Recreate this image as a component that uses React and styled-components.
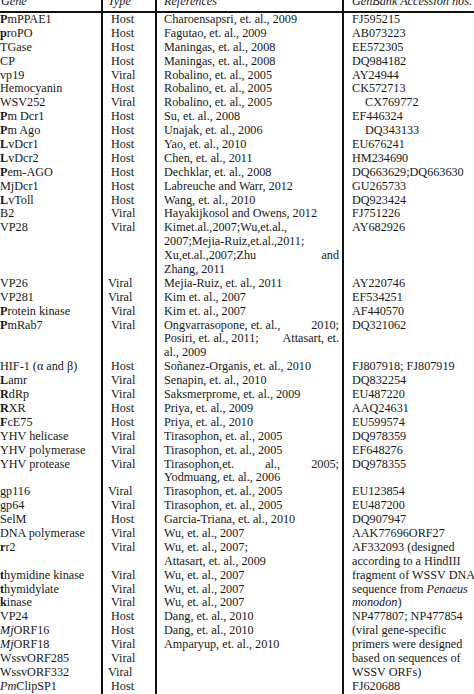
import React from "react";
import styled, { createGlobalStyle } from "styled-components";

const GlobalStyle = createGlobalStyle`
  *, *::before, *::after { box-sizing: border-box; }
  html, body {
    margin: 0;
    padding: 0;
    background: #fff;
  }
  body {
    width: 474px;
    height: 694px;
    overflow: hidden;
    font-family: "Liberation Serif", "Times New Roman", serif;
    color: #171717;
  }
`;

const Table = styled.div`
  display: grid;
  grid-template-columns: 103px 54px 187px 130px;
  margin-top: -5px;
  font-size: 12.2px;
  line-height: 13.9px;
`;

const Column = styled.div`
  display: flex;
  flex-direction: column;
  min-width: 0;
  border-right: ${(p) => (p.$last ? "none" : "2px solid #111")};

  & > div {
    padding-left: ${(p) => p.$left}px;
    padding-right: ${(p) => p.$right || 0}px;
  }
`;

const HeadCell = styled.div`
  height: 18px;
  border-bottom: 2px solid #111;
  font-style: italic;
  white-space: nowrap;
  && {
    padding-left: ${(p) => p.$left}px;
  }
`;

const Line = styled.div`
  height: 13.9px;
  white-space: nowrap;
  display: ${(p) => (p.$spread ? "flex" : "block")};
  justify-content: space-between;
  margin-left: ${(p) => p.$shift || 0}px;
`;

const Lead = styled.b`
  font-weight: 700;
`;

const Em = styled.i`
  font-style: italic;
`;

const lead = (first, rest) => (
  <>
    <Lead>{first}</Lead>
    {rest}
  </>
);

const genes = [
  lead("P", "mPPAE1"),
  lead("p", "roPO"),
  "TGase",
  "CP",
  "vp19",
  "Hemocyanin",
  "WSV252",
  lead("P", "m Dcr1"),
  lead("P", "m Ago"),
  lead("L", "vDcr1"),
  lead("L", "vDcr2"),
  lead("P", "em-AGO"),
  "MjDcr1",
  lead("L", "vToll"),
  "B2",
  "VP28",
  "",
  "",
  "",
  "VP26",
  "VP281",
  lead("P", "rotein kinase"),
  lead("P", "mRab7"),
  "",
  "",
  "HIF-1 (α and β)",
  lead("L", "amr"),
  lead("R", "dRp"),
  lead("R", "XR"),
  lead("F", "cE75"),
  "YHV helicase",
  "YHV polymerase",
  "YHV protease",
  "",
  "gp116",
  "gp64",
  "SelM",
  "DNA polymerase",
  lead("r", "r2"),
  "",
  lead("t", "hymidine kinase"),
  lead("t", "hymidylate"),
  lead("k", "inase"),
  "VP24",
  <><Em>Mj</Em>ORF16</>,
  <><Em>Mj</Em>ORF18</>,
  "WssvORF285",
  "WssvORF332",
  <><Em>Pm</Em>ClipSP1</>,
];

// "<" marks a type cell that sits a little further left
const types = [
  "Host", "Host", "Host", "Host", "Viral", "Host", "Viral", "Host", "Host",
  "Host", "Host", "Host", "Host", "Host", "Viral", "Viral", "", "", "",
  "<Viral", "<Viral", "Viral", "Viral", "", "", "Host", "Viral", "Viral",
  "Host", "Host", "Viral", "Viral", "Viral", "", "<Viral", "Viral", "Host",
  "Viral", "Viral", "", "Viral", "Viral", "Viral", "Host", "Host", "Viral",
  "Viral", "<Viral", "Host",
];

// arrays are lines whose pieces are spread across the column
const refs = [
  "Charoensapsri, et. al., 2009",
  "Fagutao, et. al., 2009",
  "Maningas, et. al., 2008",
  "Maningas, et. al., 2008",
  "Robalino, et. al., 2005",
  "Robalino, et. al., 2005",
  "Robalino, et. al., 2005",
  "Su, et. al., 2008",
  "Unajak, et. al., 2006",
  "Yao, et. al., 2010",
  "Chen, et. al., 2011",
  "Dechklar, et. al., 2008",
  "Labreuche and Warr, 2012",
  "Wang, et. al., 2010",
  "Hayakijkosol and Owens, 2012",
  "Kimet.al.,2007;Wu,et.al.,",
  "2007;Mejia-Ruiz,et.al.,2011;",
  ["Xu,et.al.,2007;Zhu", "and"],
  "Zhang, 2011",
  "Mejia-Ruiz, et. al., 2011",
  "Kim et. al., 2007",
  "Kim et. al., 2007",
  ["Ongvarrasopone, et. al.,", "2010;"],
  ["Posiri, et. al., 2011;", "Attasart, et."],
  "al., 2009",
  "Soñanez-Organis, et. al., 2010",
  "Senapin, et. al., 2010",
  "Saksmerprome, et. al., 2009",
  "Priya, et. al., 2009",
  "Priya, et. al., 2010",
  "Tirasophon, et. al., 2005",
  "Tirasophon, et. al., 2005",
  ["Tirasophon,et.", "al.,", "2005;"],
  "Yodmuang, et. al., 2006",
  "Tirasophon, et. al., 2005",
  "Tirasophon, et. al., 2005",
  "Garcia-Triana, et. al., 2010",
  "Wu, et. al., 2007",
  "Wu, et. al., 2007;",
  "Attasart, et. al., 2009",
  "Wu, et. al., 2007",
  "Wu, et. al., 2007",
  "Wu, et. al., 2007",
  "Dang, et. al., 2010",
  "Dang, et. al., 2010",
  "Amparyup, et. al., 2010",
  "",
  "",
  "",
];

// ">" marks an accession number that is indented
const accessions = [
  "FJ595215",
  "AB073223",
  "EE572305",
  "DQ984182",
  "AY24944",
  "CK572713",
  ">CX769772",
  "EF446324",
  ">DQ343133",
  "EU676241",
  "HM234690",
  "DQ663629;DQ663630",
  "GU265733",
  "DQ923424",
  "FJ751226",
  "AY682926",
  "",
  "",
  "",
  "AY220746",
  "EF534251",
  "AF440570",
  "DQ321062",
  "",
  "",
  "FJ807918; FJ807919",
  "DQ832254",
  "EU487220",
  "AAQ24631",
  "EU599574",
  "DQ978359",
  "EF648276",
  "DQ978355",
  "",
  "EU123854",
  "EU487200",
  "DQ907947",
  "AAK77696ORF27",
  "AF332093 (designed",
  "according to a HindIII",
  "fragment of WSSV DNA",
  <>sequence from <Em>Penaeus</Em></>,
  <><Em>monodon</Em>)</>,
  "NP477807; NP477854",
  "(viral gene-specific",
  "primers were designed",
  "based on sequences of",
  "WSSV ORFs)",
  "FJ620688",
];

const App = () => {
  return (
    <>
      <GlobalStyle />
      <Table>
        <Column $left={0}>
          <HeadCell $left={1}>Gene</HeadCell>
          {genes.map((g, i) => (
            <Line key={i}>{g}</Line>
          ))}
        </Column>

        <Column $left={8}>
          <HeadCell $left={5}>Type</HeadCell>
          {types.map((t, i) => (
            <Line key={i} $shift={t.startsWith("<") ? -3 : 0}>
              {t.replace("<", "")}
            </Line>
          ))}
        </Column>

        <Column $left={7} $right={3}>
          <HeadCell $left={7}>References</HeadCell>
          {refs.map((r, i) =>
            Array.isArray(r) ? (
              <Line key={i} $spread>
                {r.map((part) => (
                  <span key={part}>{part}</span>
                ))}
              </Line>
            ) : (
              <Line key={i}>{r}</Line>
            )
          )}
        </Column>

        <Column $left={8} $last>
          <HeadCell $left={8}>GenBank Accession nos.</HeadCell>
          {accessions.map((a, i) =>
            typeof a === "string" && a.startsWith(">") ? (
              <Line key={i} $shift={13}>
                {a.slice(1)}
              </Line>
            ) : (
              <Line key={i}>{a}</Line>
            )
          )}
        </Column>
      </Table>
    </>
  );
};

export default App;
